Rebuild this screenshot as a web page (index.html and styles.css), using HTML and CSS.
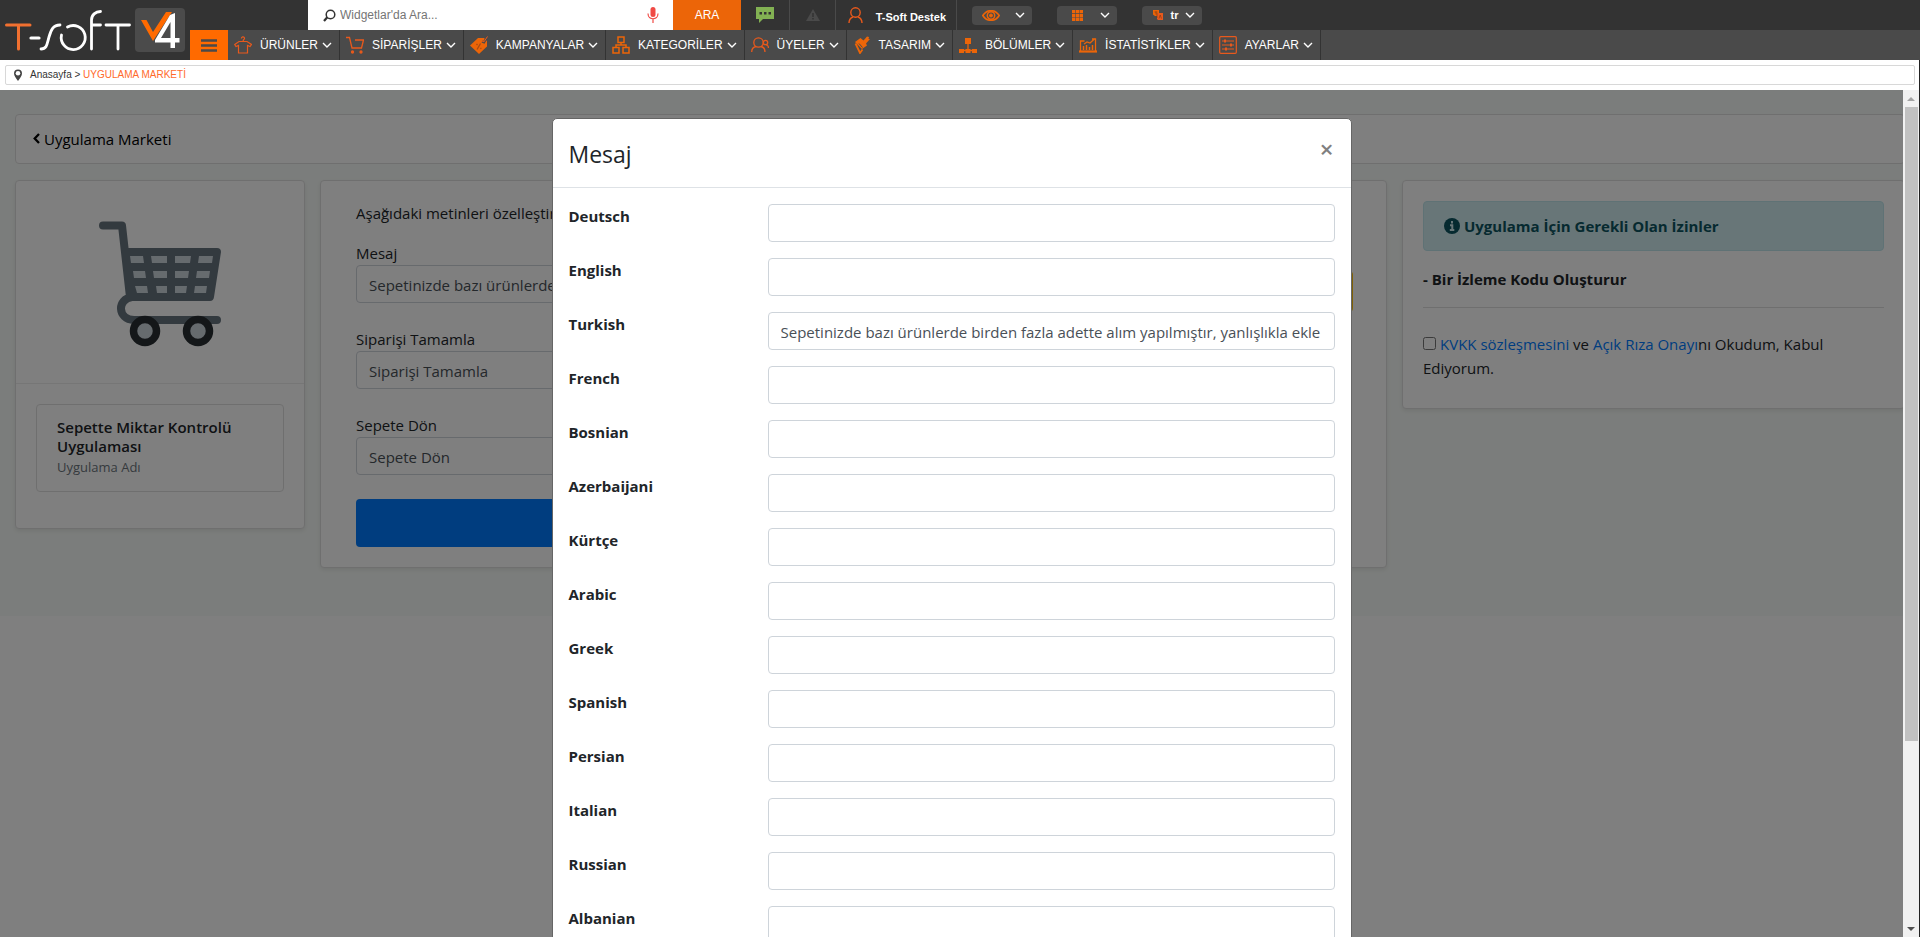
FILE: index.html
```html
<!DOCTYPE html>
<html lang="tr">
<head>
<meta charset="utf-8">
<title>T-Soft V4 - Uygulama Marketi</title>
<link rel="stylesheet" href="styles.css">
</head>
<body>
<svg class="defs" aria-hidden="true">
  <symbol id="chev" viewBox="0 0 10 6"><path d="M1 1l4 4 4-4" fill="none" stroke="#fff" stroke-width="1.4"/></symbol>
</svg>
<header class="header">
  <a class="logo" href="#" aria-label="T-Soft V4">
    <svg width="190" height="60" viewBox="0 0 190 60" fill="none" stroke-linecap="round">
      <path d="M6.500 25H30M18.500 25V49" stroke="#f17030" stroke-width="3"/>
      <g stroke="#fff" stroke-width="2.800">
        <path d="M31 38h8" stroke-width="3.200"/>
        <path d="M41 49c6 0 6-5 8-12s4-12 11-12"/>
        <path d="M67.500 27A12 12 0 1 1 61.500 35"/>
        <path d="M91.500 49V20c0-5 4-8.500 9-8.500M91.500 25h9"/>
        <path d="M106 25h23.500M118 25v24"/>
      </g>
      <rect x="135" y="8" width="50" height="44" rx="4" fill="#4b4b4b"/>
      <path d="M141 20h5.500l6.500 12 13-20h6l-19 29z" fill="#ff6a00"/>
      <path d="M170 15l5-2V38h4.500v4.500H175V48h-4.500v-5.500H155V40zM170.500 22L161 38h9.500z" fill="#fff" fill-rule="evenodd"/>
    </svg>
  </a>
  <div class="bars">
    <div class="topbar">
      <form class="search" role="search">
        <svg width="13" height="13" viewBox="0 0 13 13" fill="none" stroke="#333"><circle cx="7.500" cy="5.500" r="4.300" stroke-width="1.500"/><path d="M4.300 8.300L1 12" stroke-width="2.200"/></svg>
        <input class="search-input" type="text" placeholder="Widgetlar'da Ara..." aria-label="Widgetlar'da Ara">
        <button class="mic" type="button" aria-label="Sesli arama"><svg width="12" height="16" viewBox="0 0 12 16"><rect x="3.500" y="0" width="5" height="10" rx="2.500" fill="#f04a45"/><path d="M1 6.500c0 7 10 7 10 0M6 12v4" fill="none" stroke="#f04a45" stroke-width="1.200"/></svg></button>
        <button class="ara" type="button">ARA</button>
      </form>
      <button class="cell cell-chat" type="button" aria-label="Mesajlar"><svg width="18" height="16" viewBox="0 0 18 16"><path d="M0 0h18v12H7l-4 4v-4H0z" fill="#82b153"/><path d="M3.500 5h2.500v2.500H3.500zM8 5h2.500v2.500H8zM12.500 5H15v2.500h-2.500z" fill="#333"/></svg></button>
      <button class="cell cell-alert" type="button" aria-label="Uyarılar"><svg width="14" height="12" viewBox="0 0 14 12"><path d="M7 0l7 12H0z" fill="#4a4a4a"/><path d="M7 4v4M7 9v1.500" stroke="#333" stroke-width="1.500"/></svg></button>
      <a class="cell cell-user" href="#"><svg width="15" height="16" viewBox="0 0 15 16" fill="none" stroke="#e8591c" stroke-width="1.400"><circle cx="7.500" cy="5.500" r="4.700"/><path d="M1 16c0-3.500 1.500-5 4-6M14 16c0-3.500-1.500-5-4-6"/></svg><span>T-Soft Destek</span></a>
      <div class="pills">
        <button class="pill" type="button" aria-label="Görünüm"><svg width="18" height="11" viewBox="0 0 18 11" fill="none" stroke="#ec6508"><path d="M.8 5.500C5-1 13-1 17.200 5.500 13 12 5 12 .8 5.500z" stroke-width="1.600"/><circle cx="9" cy="5.500" r="3.700" stroke-width="1.500"/><circle cx="9" cy="5.500" r="1.500" fill="#ec6508"/></svg><svg width="10" height="6"><use href="#chev"/></svg></button>
        <button class="pill" type="button" aria-label="Uygulamalar"><svg class="pill-grid" width="11" height="11" viewBox="0 0 11 11" fill="#ec6508"><path d="M0 0h3.300v3.300H0zM3.900 0h3.300v3.300H3.900zM7.700 0H11v3.300H7.700zM0 3.900h3.300v3.300H0zM3.900 3.900h3.300v3.300H3.900zM7.700 3.900H11v3.300H7.700zM0 7.700h3.300V11H0zM3.900 7.700h3.300V11H3.900zM7.700 7.700H11V11H7.700z"/></svg><svg width="10" height="6"><use href="#chev"/></svg></button>
        <button class="pill pill-lang" type="button"><svg width="12" height="10" viewBox="0 0 12 10"><path d="M1 0h6v6H3L1 4.500z" fill="#ec6508"/><path d="M5 3h6v7H6L5 9z" fill="#e8591c"/><path d="M2.500 2h3M4 1.500v3M7 8.500l1.200-3.500 1.300 3.500M5 3v5" stroke="#7a3512" fill="none" stroke-width=".6"/></svg><span>tr</span><svg width="10" height="6"><use href="#chev"/></svg></button>
      </div>
    </div>
    <nav class="nav">
      <button class="burger" type="button" aria-label="Menü"><svg width="16" height="13" viewBox="0 0 16 13"><path d="M0 1.500h16M0 6.500h16M0 11.500h16" stroke="#4a4a4a" stroke-width="2.600"/></svg></button>
      <a class="item" href="#"><svg width="18" height="18" viewBox="0 0 18 18" fill="none" stroke="#e8591c" stroke-width="1.200"><path d="M7.500 2.500a1.500 1.500 0 1 1 2 1.300L9 5.500M5 5.500h8l4.500 3-1.500 2-2.500-1v7.500h-9V9.500l-2.500 1L.7 8.500z"/></svg><span>ÜRÜNLER</span><svg width="10" height="6"><use href="#chev"/></svg></a>
      <a class="item" href="#"><svg width="18" height="18" viewBox="0 0 18 18" fill="none" stroke="#e8591c" stroke-width="1.300"><path d="M0 1.500h3.500L6 12h9.500L17.500 4H9"/><circle cx="6.500" cy="16" r="1" fill="#ec6508"/><circle cx="15" cy="16" r="1" fill="#ec6508"/></svg><span>SİPARİŞLER</span><svg width="10" height="6"><use href="#chev"/></svg></a>
      <a class="item" href="#"><svg width="18" height="18" viewBox="0 0 18 18"><path d="M0 9.500L8 2h6l3 3v5.500L9 18z" fill="#ec6508"/><path d="M12 5.500l2 .8L17.500.5" fill="none" stroke="#4a4a4a" stroke-width="2.400"/><path d="M12 5l2 .8L17.500.5" fill="none" stroke="#e8591c"/><path d="M6.500 8l1 1M10.500 12l.8.8M10.500 7.500l-3.500 6" stroke="#a84a12" stroke-width="1.300"/></svg><span>KAMPANYALAR</span><svg width="10" height="6"><use href="#chev"/></svg></a>
      <a class="item" href="#"><svg width="18" height="18" viewBox="0 0 18 18" fill="none" stroke="#ec6508" stroke-width="1.500"><path d="M6 1h6v5.500H6zM1 11.500h6V17H1zM11 11.500h6V17h-6zM9 6.500V9M4 11.500V9h10v2.500"/></svg><span>KATEGORİLER</span><svg width="10" height="6"><use href="#chev"/></svg></a>
      <a class="item" href="#"><svg width="18" height="18" viewBox="0 0 18 18" fill="none" stroke="#e8591c" stroke-width="1.300"><circle cx="7.500" cy="6.500" r="4.700"/><path d="M.7 16c0-3 2-5 4.500-5.500M14 16c0-3-1.500-5-4-5.500"/><circle cx="14.500" cy="6.500" r="2.200"/><path d="M17.500 12c0-2-1-3-2.500-3.300"/></svg><span>ÜYELER</span><svg width="10" height="6"><use href="#chev"/></svg></a>
      <a class="item" href="#"><svg width="18" height="18" viewBox="0 0 18 18"><path d="M2 6l5.500-4 3 2.500L14 .5l2 .5-.5 2L17 3l-4 4.500 1 2-5 3.500z" fill="#ec6508"/><path d="M2.500 7.500L7 17l2.500-3.500" fill="none" stroke="#ec6508" stroke-width="1.800"/><path d="M6 7.500l3.500 4" stroke="#4a4a4a"/></svg><span>TASARIM</span><svg width="10" height="6"><use href="#chev"/></svg></a>
      <a class="item" href="#"><svg width="18" height="18" viewBox="0 0 18 18"><path d="M6 2h6v6H6zM0 13h5v4H0zM6.500 13h5v4h-5zM13 13h5v4h-5z" fill="#ec6508"/><path d="M9 8v6M2.500 14.500h13" fill="none" stroke="#ec6508" stroke-width="1.300"/></svg><span>BÖLÜMLER</span><svg width="10" height="6"><use href="#chev"/></svg></a>
      <a class="item" href="#"><svg width="18" height="18" viewBox="0 0 18 18" fill="none" stroke="#ec6508" stroke-width="1.300"><path d="M1.500 15V5h4M5 8l3-2 3 1 5-4.500M13 3h3.500v12"/><path d="M4.500 14v-4M7.500 14V9M10.500 14v-3M13.500 14V9" stroke-width="1.500"/><path d="M0 15.500h18" stroke-width="2.200"/></svg><span>İSTATİSTİKLER</span><svg width="10" height="6"><use href="#chev"/></svg></a>
      <a class="item" href="#"><svg width="18" height="18" viewBox="0 0 18 18" fill="none" stroke="#e8591c" stroke-width="1.200"><rect x=".7" y=".7" width="16.600" height="16.600" rx="1"/><path d="M3 5h12M3 9h12M3 13h12"/><path d="M6 3.500v3M12 7.500v3M7 11.500v3" stroke-width="2"/></svg><span>AYARLAR</span><svg width="10" height="6"><use href="#chev"/></svg></a>
    </nav>
  </div>
</header>

<div class="crumb-wrap">
  <nav class="crumb" aria-label="Konum">
    <svg width="10" height="12" viewBox="0 0 10 12"><path d="M5 12C3 9 1 7 1 4.500a4 4 0 0 1 8 0C9 7 7 9 5 12z" fill="#444"/><circle cx="5" cy="4.300" r="2.300" fill="#fff"/></svg>
    <span><a href="#">Anasayfa</a> &gt; <a class="current" href="#">UYGULAMA MARKETİ</a></span>
  </nav>
</div>

<div class="frame">
  <div class="view">
    <main class="page">
      <div class="card back-card"><a class="back" href="#"><svg width="7" height="11" viewBox="0 0 7 11"><path d="M6 1L1.700 5.500 6 10" fill="none" stroke="#000" stroke-width="2.300"/></svg>Uygulama Marketi</a></div>
      <div class="columns">
        <section class="card app">
          <div class="app-image">
            <svg width="122" height="126" viewBox="0 0 122 126" role="img" aria-label="Sepet">
              <path d="M4 4.500h19L31 76M33 76c-15 2-15 22 2 23h83" fill="none" stroke="#67757f" stroke-width="8" stroke-linecap="round" stroke-linejoin="round"/>
              <path d="M28 27h90q4 0 4 4l-7 45q-.5 4-4 4H30z" fill="#67757f"/>
              <path d="M31 35h13l1 7H32zM52 35h16v7H53zM76 35h16l-1 7H76zM100 35h14l-1 7H99zM34 50h12l1 7H35zM54 50h14v7H55zM76 50h14l-1 7H76zM98 50h13l-1 7H97zM36 65h12l1 7H38zM57 65h11v7H58zM76 65h12l-1 7H76zM96 65h12l-1 7H95z" fill="#ccd6dd"/>
              <circle cx="46" cy="110" r="11.500" fill="#ccd6dd" stroke="#292f33" stroke-width="7.500"/>
              <circle cx="99" cy="110" r="11.500" fill="#ccd6dd" stroke="#292f33" stroke-width="7.500"/>
            </svg>
          </div>
          <div class="app-info">
            <div class="app-box">
              <h1 class="app-name">Sepette Miktar Kontrolü Uygulaması</h1>
              <p class="app-sub">Uygulama Adı</p>
            </div>
          </div>
        </section>
        <section class="card texts">
          <p class="intro">Aşağıdaki metinleri özelleştirin.</p>
          <div class="group">
            <label for="msg">Mesaj</label>
            <div class="with-button">
              <input class="field" id="msg" type="text" value="Sepetinizde bazı ürünlerde">
              <button class="edit" type="button" aria-label="Çeviriler"><svg width="14" height="14" viewBox="0 0 14 14"><path d="M1 13l1-4 8-8 3 3-8 8z"/></svg></button>
            </div>
          </div>
          <div class="group">
            <label for="done">Siparişi Tamamla</label>
            <input class="field" id="done" type="text" value="Siparişi Tamamla">
          </div>
          <div class="group">
            <label for="cart">Sepete Dön</label>
            <input class="field" id="cart" type="text" value="Sepete Dön">
          </div>
          <button class="save" type="button" aria-label="Kaydet"></button>
        </section>
        <section class="card perms">
          <div class="alert"><svg width="16" height="16" viewBox="0 0 16 16"><circle cx="8" cy="8" r="8" fill="#0c5460"/><path d="M8 3v2.500M6 7.300h2.300V12M5.800 12h4.500" stroke="#d1ecf1" stroke-width="2" fill="none"/></svg>Uygulama İçin Gerekli Olan İzinler</div>
          <p class="perm">- Bir İzleme Kodu Oluşturur</p>
          <hr class="rule">
          <p class="consent"><input class="tick" type="checkbox" id="kvkk"><label for="kvkk"><a href="#">KVKK sözleşmesini</a> ve <a href="#">Açık Rıza Onayı</a>nı Okudum, Kabul Ediyorum.</label></p>
        </section>
      </div>
    </main>
    <div class="backdrop">
      <div class="modal" role="dialog" aria-labelledby="mtitle">
        <div class="modal-head">
          <h2 class="modal-title" id="mtitle">Mesaj</h2>
          <button class="close" type="button" aria-label="Kapat">×</button>
        </div>
        <form class="modal-body">
          <div class="row"><label for="l1">Deutsch</label><input class="field" id="l1" type="text"></div>
          <div class="row"><label for="l2">English</label><input class="field" id="l2" type="text"></div>
          <div class="row"><label for="l3">Turkish</label><input class="field" id="l3" type="text" value="Sepetinizde bazı ürünlerde birden fazla adette alım yapılmıştır, yanlışlıkla ekle"></div>
          <div class="row"><label for="l4">French</label><input class="field" id="l4" type="text"></div>
          <div class="row"><label for="l5">Bosnian</label><input class="field" id="l5" type="text"></div>
          <div class="row"><label for="l6">Azerbaijani</label><input class="field" id="l6" type="text"></div>
          <div class="row"><label for="l7">Kürtçe</label><input class="field" id="l7" type="text"></div>
          <div class="row"><label for="l8">Arabic</label><input class="field" id="l8" type="text"></div>
          <div class="row"><label for="l9">Greek</label><input class="field" id="l9" type="text"></div>
          <div class="row"><label for="l10">Spanish</label><input class="field" id="l10" type="text"></div>
          <div class="row"><label for="l11">Persian</label><input class="field" id="l11" type="text"></div>
          <div class="row"><label for="l12">Italian</label><input class="field" id="l12" type="text"></div>
          <div class="row"><label for="l13">Russian</label><input class="field" id="l13" type="text"></div>
          <div class="row"><label for="l14">Albanian</label><input class="field" id="l14" type="text"></div>
        </form>
      </div>
    </div>
  </div>
  <div class="scroll" aria-hidden="true">
    <svg width="16" height="17" viewBox="0 0 16 17"><path d="M8 7l4 4H4z" fill="#a3a3a3"/></svg>
    <div class="track"><div class="thumb"></div></div>
    <svg width="16" height="17" viewBox="0 0 16 17"><path d="M8 11L4 7h8z" fill="#505050"/></svg>
  </div>
</div>
</body>
</html>
```
FILE: styles.css
```css
* { box-sizing: border-box; }
body {
  margin: 0;
  height: 100vh;
  display: flex;
  flex-direction: column;
  overflow: hidden;
  background: #fff;
  color: #212529;
  font: 15px/24px "Open Sans", "Noto Sans", sans-serif;
}
.defs { position: absolute; width: 0; height: 0; }
button, input { font: inherit; }
button { border: 0; padding: 0; background: none; color: inherit; }
a { color: inherit; text-decoration: none; }
h1, h2, p { margin: 0; }
svg { flex: none; display: block; }

/* Header */
.header {
  display: flex;
  height: 60px;
  background: #333;
  color: #fff;
  font: 12px/16px "Liberation Sans", Arial, sans-serif;
}
.logo { width: 190px; flex: none; }
.bars { flex: 1; min-width: 0; }
.topbar { display: flex; height: 30px; padding-left: 118px; }
.search { display: flex; align-items: center; width: 433px; padding-left: 15px; background: #fff; }
.search-input { flex: 1; min-width: 0; border: 0; padding: 0 0 0 4px; outline: 0; color: #333; }
.search-input::placeholder { color: #757575; opacity: 1; }
.mic { width: 12px; margin-right: 14px; }
.ara { align-self: stretch; width: 68px; background: #ec6508; color: #fff; }
.cell { display: flex; align-items: center; justify-content: center; border-right: 1px solid #4a4a4a; }
.cell-chat { width: 49px; }
.cell-alert { width: 46px; }
.cell-user { width: 121px; justify-content: flex-end; gap: 13px; padding-right: 10px; font-size: 11px; font-weight: bold; }
.cell-user span { padding-top: 4px; }
.pills { display: flex; align-items: center; gap: 25px; padding-left: 15px; }
.pill {
  display: flex;
  align-items: center;
  justify-content: space-between;
  width: 60px;
  height: 19px;
  padding: 0 7px 0 10px;
  border-radius: 4px;
  background: #4a4a4a;
}
.pill-grid { margin-left: 5px; }
.pill-lang span { font-weight: bold; font-size: 11px; }
.nav { display: flex; height: 30px; background: #4a4a4a; }
.burger { display: flex; align-items: center; justify-content: center; width: 38px; background: #ff6a00; }
.item { display: flex; align-items: center; padding: 0 7px 0 6px; border-right: 1px solid #333; white-space: nowrap; }
.item span { margin: 0 4px 0 8px; }

/* Location bar */
.crumb-wrap { padding: 5px 4px 5px 5px; background: #fff; border-right: 1px solid #222; }
.crumb {
  display: flex;
  align-items: center;
  gap: 7px;
  height: 20px;
  padding-left: 7px;
  border: 1px solid #d8d8d8;
  border-radius: 2px;
  color: #333;
  font: 10px/14px "Liberation Sans", Arial, sans-serif;
}
.current { color: #ff6a2b; }

/* Framed page */
.frame { flex: 1; min-height: 0; display: flex; border-right: 1px solid #222; }
.view { position: relative; flex: 1; min-width: 0; overflow: hidden; }
.page { margin-right: -2px; padding: 24px 0 48px 15px; background: #f7fbf8; }
.card {
  border: 1px solid #dfdfdf;
  border-radius: 4px;
  background: #fff;
  box-shadow: 0 2px 4px rgba(0, 0, 0, .08);
}
.back-card { height: 50px; padding: 11px 17px; box-shadow: none; }
.back { display: inline-flex; align-items: center; gap: 4px; color: #000; }
.columns {
  display: grid;
  grid-template-columns: 290fr 1067fr 503fr;
  gap: 15px;
  align-items: start;
  margin-top: 16px;
}
.app-image { display: flex; justify-content: center; padding: 40px 0 36px; border-bottom: 1px solid #ececec; }
.app-info { padding: 20px 20px 36px; }
.app-box { padding: 13px 20px 14px; border: 1px solid #dfdfdf; border-radius: 4px; }
.app-name { font-size: 15px; line-height: 19px; font-weight: 600; }
.app-sub { padding-top: 2px; color: #6c757d; font-size: 13px; line-height: 19px; }
.texts { padding: 20px 36px 20px 35px; }
.intro { margin-bottom: 16px; }
.group { display: flex; flex-direction: column; margin-bottom: 24px; }
.field {
  width: 100%;
  min-width: 0;
  height: 38px;
  padding: 7px 12px 5px;
  border: 1px solid #ced4da;
  border-radius: 4px;
  background: #fff;
  color: #495057;
}
.with-button { display: flex; align-items: flex-start; gap: 15px; height: 38px; margin-right: -3px; }
.edit { flex: none; width: 48px; height: 41px; margin-top: 6px; border-radius: 4px; background: #ffc107; display: flex; align-items: center; justify-content: center; }
.save { display: block; width: 100%; height: 48px; border-radius: 4px; background: #007bff; }
.perms { padding: 20px 20px 28px; }
.alert {
  display: flex;
  align-items: center;
  gap: 4px;
  height: 50px;
  padding: 0 20px;
  border: 1px solid #bee5eb;
  border-radius: 4px;
  background: #d1ecf1;
  color: #0c5460;
  font-weight: bold;
}
.perm { margin-top: 16px; font-weight: bold; }
.rule { margin: 16px 0 24px; border: 0; border-top: 1px solid #dfdfdf; }
.tick { width: 13px; height: 13px; margin: 0 4px 0 0; }
.consent a { color: #007bff; }

/* Dialog */
.backdrop { position: absolute; inset: 0; overflow: hidden; background: rgba(0, 0, 0, .5); }
.modal {
  width: 800px;
  margin: 28px auto;
  border: 1px solid #666;
  border-radius: 5px;
  background: #fff;
}
.modal-head { display: flex; justify-content: space-between; padding: 17px 14px 14px 16px; border-bottom: 1px solid #dee2e6; }
.modal-title { font-size: 23px; line-height: 37px; font-weight: 400; }
.close { width: 20px; height: 26px; color: #808080; font-size: 24px; line-height: 26px; font-weight: 600; }
.modal-body { display: flex; flex-direction: column; gap: 16px; padding: 16px; }
.row { display: grid; grid-template-columns: 199fr 567fr; align-items: start; }
.row label { font-weight: bold; }

/* Scroll bar */
.scroll { display: flex; flex-direction: column; width: 16px; background: #f1f1f1; }
.track { flex: 1; min-height: 0; padding: 0 1px 0 2px; }
.thumb { height: 78%; background: #c1c1c1; }
```
